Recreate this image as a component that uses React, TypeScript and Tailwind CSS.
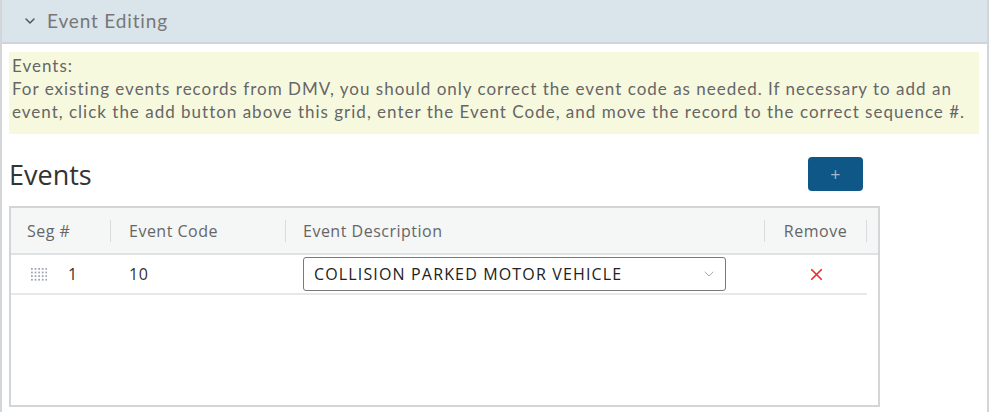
import { ChevronDown, X } from "lucide-react";

function DragDots() {
  const dots = [];
  for (let r = 0; r < 4; r++) {
    for (let c = 0; c < 5; c++) {
      dots.push(<rect key={`${r}-${c}`} x={c * 3.6} y={r * 3.6} width="1.8" height="1.8" fill="#a3a6b4" />);
    }
  }
  return (
    <svg width="16" height="13" viewBox="0 0 16 13">
      {dots}
    </svg>
  );
}

export default function App() {
  return (
    <div className="w-[991px] h-[412px] bg-white overflow-hidden font-['Open_Sans',sans-serif]">
      <div className="mr-[2px] h-full border-x-2 border-[#d3d6d9]">
        <div className="h-[44px] bg-[#dae4eb] border-b-2 border-[#cfd5da] flex items-center pl-[20px] text-[#777]">
          <ChevronDown size={16} strokeWidth={2.2} className="text-[#555]" />
          <span className="ml-[9px] text-[19px] tracking-[0.85px] font-['Lato',sans-serif]">Event Editing</span>
        </div>
        <div className="px-[7px] pt-[8px]">
          <div className="bg-[#f7f9df] px-[3px] pt-[2px] pb-[11px] text-[17px] tracking-[1px] leading-[23px] text-[#666] font-['Lato',sans-serif] mr-[1px] whitespace-nowrap">
            <div>Events:</div>
            <div>
              For existing events records from DMV, you should only correct the event code as needed. If necessary to add an
              <br />
              event, click the add button above this grid, enter the Event Code, and move the record to the correct sequence #.
            </div>
          </div>
          <div className="w-[871px] mt-[23px] flex items-center justify-between pr-[17px]">
            <h2 className="text-[27px] text-[#333] leading-none">Events</h2>
            <button className="w-[55px] h-[34px] rounded-[4px] bg-[#0f5787] flex items-center justify-center">
              <span className="text-[#9fb7cc] text-[18px] leading-none">+</span>
            </button>
          </div>
          <div className="w-[871px] h-[201px] mt-[15px] border-2 border-[#d3d6d9] text-[16px] tracking-[0.5px] text-[#666]">
            <div className="h-[47px] bg-[#f5f6f6] border-b-2 border-[#dfe2e4] flex items-center">
              <div className="w-[100px] pl-[16px] border-r border-[#d9dcdf] h-[22px] flex items-center">Seg #</div>
              <div className="w-[175px] pl-[18px] border-r border-[#d9dcdf] h-[22px] flex items-center">Event Code</div>
              <div className="w-[479px] pl-[17px] border-r border-[#d9dcdf] h-[22px] flex items-center">Event Description</div>
              <div className="w-[102px] flex justify-center border-r border-[#d9dcdf] h-[22px] items-center">Remove</div>
            </div>
            <div className="w-[856px] h-[40px] border-b-2 border-[#e6e8ea] flex items-center text-[#333]">
              <div className="w-[100px] flex items-center pl-[20px]">
                <DragDots />
                <span className="ml-[21px]">1</span>
              </div>
              <div className="w-[175px] pl-[18px]">10</div>
              <div className="w-[479px] pl-[17px]">
                <div className="w-[423px] h-[34px] border border-[#7a7a7a] rounded-[3px] flex items-center justify-between pl-[10px] pr-[8px] text-[#222]">
                  <span className="tracking-[1.15px]">COLLISION PARKED MOTOR VEHICLE</span>
                  <ChevronDown size={16} strokeWidth={1.5} className="text-[#aaa]" />
                </div>
              </div>
              <div className="w-[102px] flex justify-center">
                <X size={19} strokeWidth={2.2} className="text-[#f03030]" />
              </div>
            </div>
          </div>
        </div>
      </div>
    </div>
  );
}
